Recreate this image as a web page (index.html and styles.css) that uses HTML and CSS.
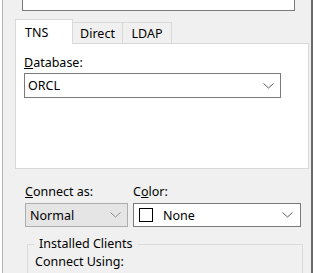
FILE: index.html
```html
<!DOCTYPE html>
<html>
<head>
<meta charset="utf-8">
<link rel="stylesheet" href="styles.css">
</head>
<body>
<div class="win">
  <div class="topbox"></div>
  <div class="tabs">
    <div class="tab sel">TNS</div>
    <div class="tab">Direct</div>
    <div class="tab">LDAP</div>
  </div>
  <div class="panel">
    <div class="label"><u>D</u>atabase:</div>
    <div class="combo db">
      <span class="val">ORCL</span>
      <svg class="chev" width="11" height="6" viewBox="0 0 11 6"><path d="M0.5 0.5 L5.5 5 L10.5 0.5" fill="none" stroke="#5a5a5a" stroke-width="1"/></svg>
    </div>
  </div>
  <div class="row">
    <div class="col c1">
      <div class="label"><u>C</u>onnect as:</div>
      <div class="combo normal">
        <span class="val">Normal</span>
        <svg class="chev" width="11" height="6" viewBox="0 0 11 6"><path d="M0.5 0.5 L5.5 5 L10.5 0.5" fill="none" stroke="#8a8a8a" stroke-width="1"/></svg>
      </div>
    </div>
    <div class="col c2">
      <div class="label">C<u>o</u>lor:</div>
      <div class="combo color">
        <span class="swatch"></span>
        <span class="val">None</span>
        <svg class="chev" width="11" height="6" viewBox="0 0 11 6"><path d="M0.5 0.5 L5.5 5 L10.5 0.5" fill="none" stroke="#5a5a5a" stroke-width="1"/></svg>
      </div>
    </div>
  </div>
  <div class="group">
    <div class="legend">Installed Clients</div>
    <div class="using">Connect Using:</div>
  </div>
</div>
</body>
</html>
```

FILE: styles.css
```css
html, body {
  margin: 0;
  padding: 0;
  background: #ffffff;
  height: 273px;
  overflow: hidden;
}
body {
  font-family: "Noto Sans", "Open Sans", sans-serif;
  font-size: 12.5px;
  color: #000;
}
.win {
  margin-left: 2px;
  width: 311px;
  height: 273px;
  box-sizing: border-box;
  background: #f0f0f0;
  border-left: 1px solid #b4b4b4;
  border-right: 2px solid #6a6a6a;
  padding-left: 12px;
}
.topbox {
  margin-left: 7px;
  width: 271px;
  height: 10px;
  background: #fff;
  border: 1px solid #7a7a7a;
  border-top: none;
}
.tabs {
  display: flex;
  align-items: flex-end;
  margin-top: 8px;
  height: 24px;
  position: relative;
  z-index: 1;
}
.tab {
  height: 21px;
  box-sizing: border-box;
  border: 1px solid #d9d9d9;
  border-bottom: none;
  background: #f0f0f0;
  padding: 2px 0 0 0;
  text-align: center;
  line-height: 17px;
  margin-left: -1px;
}
.tab:nth-child(1) { width: 58px; margin-left: 0; }
.tab:nth-child(2) { width: 51px; }
.tab:nth-child(3) { width: 50px; }
.tab.sel {
  height: 25px;
  background: #fff;
  padding-top: 4px;
  margin-bottom: -1px;
  text-align: left;
  padding-left: 9px;
}
.panel {
  width: 294px;
  height: 126px;
  box-sizing: border-box;
  background: #fff;
  border: 1px solid #d9d9d9;
  padding: 11px 0 0 8px;
}
.label {
  line-height: 16px;
  height: 16px;
}
.combo {
  display: flex;
  align-items: center;
  box-sizing: border-box;
  border: 1px solid #7a7a7a;
  background: #fff;
  padding: 0 0 0 3px;
  position: relative;
}
.combo .val { flex: 1; }
.combo .chev { margin-right: 6px; }
.db {
  margin-top: 2px;
  width: 257px;
  height: 25px;
}
.row {
  display: flex;
  margin-top: 15px;
  padding-left: 10px;
}
.col .label { margin-bottom: 3px; }
.c1 { width: 108px; }
.normal {
  width: 103px;
  height: 24px;
  background: #e5e5e5;
  border-color: #adadad;
  padding-left: 4px;
}
.normal .chev { margin-right: 6px; }
.color {
  width: 168px;
  height: 24px;
  padding-left: 5px;
}
.color .chev { margin-right: 7px; }
.swatch {
  width: 12px;
  height: 12px;
  border: 1px solid #000;
  background: #fff;
  margin-right: 10px;
}
.group {
  margin: 17px 0 0 12px;
  width: 276px;
  height: 40px;
  box-sizing: border-box;
  border: 1px solid #dcdcdc;
  position: relative;
  padding: 9px 0 0 7px;
}
.legend {
  position: absolute;
  top: -9px;
  left: 6px;
  background: #f0f0f0;
  padding: 0 5px;
  line-height: 16px;
}
.using { line-height: 16px; }
```
